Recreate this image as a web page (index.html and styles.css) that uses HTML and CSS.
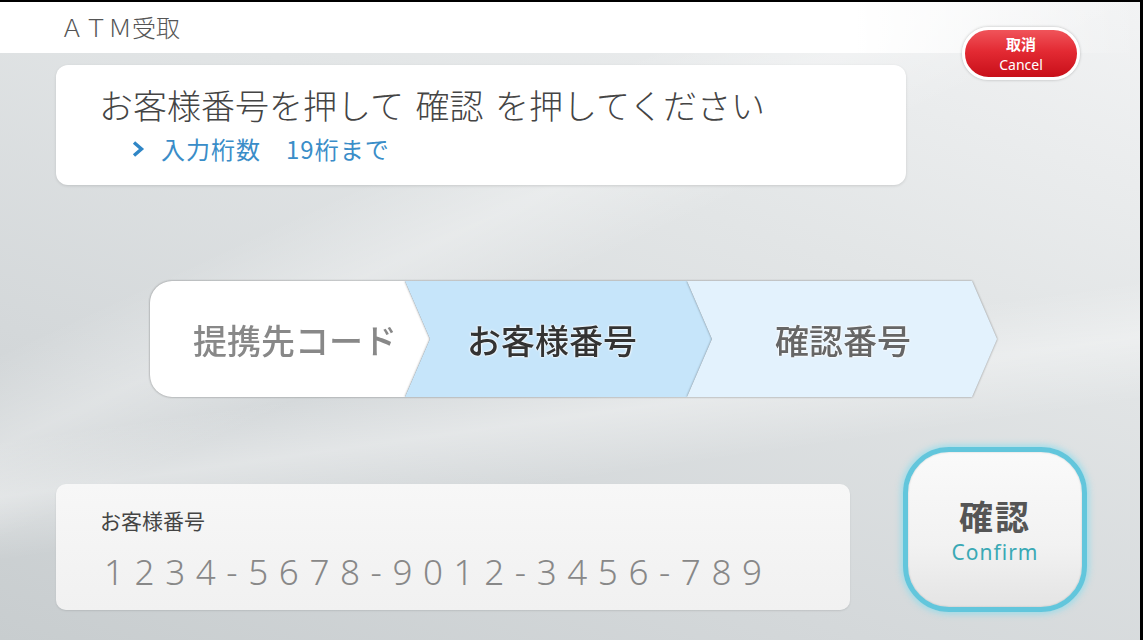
FILE: index.html
```html
<!DOCTYPE html>
<html lang="ja">
<head>
    <meta charset="UTF-8">
    <meta name="viewport" content="width=device-width, initial-scale=1.0">
    <title>ATM受取</title>
    <link rel="stylesheet" href="styles.css">
</head>
<body>
    <div class="screen">
        <div class="top">
            <div class="top-left">
                <div class="title">ＡＴＭ受取</div>
                <div class="card">
                    <p class="guide">お客様番号を押して 確認 を押してください</p>
                    <p class="sub">
                        <svg class="chev" width="14" height="18" viewBox="0 0 14 18"><path d="M3 2.5 L10.5 9 L3 15.5" fill="none" stroke="#2f86c6" stroke-width="3.4"/></svg>
                        入力桁数　19桁まで
                    </p>
                </div>
            </div>
            <button class="cancel" type="button">
                <span class="cancel-jp">取消</span>
                <span class="cancel-en">Cancel</span>
            </button>
        </div>

        <div class="steps">
            <div class="step-wrap"><div class="step step-done">提携先コード</div></div>
            <div class="step-wrap"><div class="step step-now">お客様番号</div></div>
            <div class="step-wrap"><div class="step step-next">確認番号</div></div>
        </div>

        <div class="bottom">
            <div class="field">
                <div class="field-label">お客様番号</div>
                <div class="field-value">1234-5678-9012-3456-789</div>
            </div>
            <button class="confirm" type="button">
                <span class="confirm-jp">確認</span>
                <span class="confirm-en">Confirm</span>
            </button>
        </div>
    </div>
</body>
</html>
```

FILE: styles.css
```css
*{
    margin:0;
    padding:0;
    box-sizing:border-box;
}
body{
    width:1143px;
    height:640px;
    overflow:hidden;
    font-family:"Noto Sans CJK JP", "Noto Sans", sans-serif;
}
.screen{
    width:1143px;
    height:640px;
    border-top:2px solid #000;
    border-right:3px solid #000;
    background:
        linear-gradient(to right, #fff 0, #fff 75%, rgba(255,255,255,0) 100%) top/100% 51px no-repeat,
        linear-gradient(172deg, rgba(255,255,255,0) 55%, rgba(255,255,255,.35) 62%, rgba(255,255,255,0) 70%),
        linear-gradient(155deg, rgba(255,255,255,0) 30%, rgba(255,255,255,.3) 38%, rgba(255,255,255,0) 46%),
        linear-gradient(200deg, #f2f3f4 0%, #e2e5e6 35%, #d4d8da 70%, #c8cdcf 100%);
    overflow:hidden;
}
.top{
    display:flex;
    padding-left:56px;
}
.top-left{
    width:850px;
}
.title{
    height:51px;
    padding:10px 0 0 4px;
    font-size:24px;
    font-weight:300;
    color:#555;
    line-height:30px;
}
.card{
    margin-top:12px;
    height:120px;
    background:#fff;
    border-radius:12px;
    box-shadow:0 1px 3px rgba(0,0,0,.12);
    padding:18px 0 0 43px;
}
.guide{
    font-size:34px;
    font-weight:300;
    color:#444;
    line-height:44px;
    word-spacing:4px;
}
.sub{
    display:flex;
    align-items:center;
    margin:7px 0 0 32px;
    font-size:24px;
    letter-spacing:1px;
    color:#3a8dc8;
    line-height:30px;
}
.chev{
    margin-right:16px;
}
.cancel{
    margin:25px 0 0 56px;
    width:118px;
    height:53px;
    border:3px solid #fff;
    border-radius:27px;
    background:linear-gradient(to bottom, #f0545a 0%, #e32a33 45%, #c80f19 100%);
    box-shadow:0 0 3px rgba(0,0,0,.25);
    display:flex;
    flex-direction:column;
    align-items:center;
    justify-content:center;
    color:#fff;
    font-family:"Noto Sans CJK JP", sans-serif;
}
.cancel-jp{
    font-size:15px;
    font-weight:700;
    line-height:22px;
}
.cancel-en{
    font-family:"Noto Sans", sans-serif;
    font-size:14px;
    line-height:19px;
}
.steps{
    display:flex;
    margin:96px 0 0 150px;
    height:116px;
}
.step-wrap{
    filter:drop-shadow(0 0 1px rgba(0,0,0,.4));
}
.step-wrap + .step-wrap{
    margin-left:-25px;
}
.step{
    height:116px;
    display:flex;
    align-items:center;
    font-size:34px;
    font-weight:500;
    text-shadow:0 0 3px #fff, 0 0 2px #fff, 0 0 1px #fff;
}
.step-done{
    width:280px;
    padding-left:43px;
    background:#fff;
    color:#888;
    border-radius:22px 0 0 22px;
    clip-path:polygon(0 0, 255px 0, 100% 50%, 255px 100%, 0 100%);
}
.step-now{
    width:307px;
    padding-left:62px;
    background:#c6e5fa;
    color:#333;
    clip-path:polygon(0 0, calc(100% - 25px) 0, 100% 50%, calc(100% - 25px) 100%, 0 100%, 25px 50%);
}
.step-next{
    width:310px;
    padding-left:88px;
    background:#e3f2fd;
    color:#666;
    clip-path:polygon(0 0, calc(100% - 25px) 0, 100% 50%, calc(100% - 25px) 100%, 0 100%, 25px 50%);
}
.bottom{
    display:flex;
    align-items:flex-end;
    margin-top:50px;
    padding-left:56px;
}
.field{
    width:794px;
    height:126px;
    margin-bottom:2px;
    border-radius:10px;
    background:linear-gradient(to bottom, #f7f7f7, #f1f1f1);
    box-shadow:0 1px 2px rgba(0,0,0,.1);
    padding:22px 0 0 44px;
}
.field-label{
    font-size:21px;
    color:#444;
    line-height:28px;
}
.field-value{
    margin-top:18px;
    font-family:"Noto Sans", sans-serif;
    font-weight:300;
    font-size:35px;
    letter-spacing:10.6px;
    color:#888;
    line-height:40px;
    padding-left:4px;
}
.confirm{
    margin-left:53px;
    width:184px;
    height:165px;
    border-radius:46px;
    border:5px solid #62c6dc;
    box-shadow:0 0 6px 2px rgba(130,220,238,.7), inset 0 0 2px rgba(0,0,0,.2);
    background:linear-gradient(to bottom, #fafafa 0%, #f2f2f2 60%, #e4e4e4 100%);
    display:flex;
    flex-direction:column;
    align-items:center;
    justify-content:center;
}
.confirm-jp{
    font-family:"Noto Sans CJK JP", sans-serif;
    font-size:34px;
    font-weight:700;
    color:#555;
    line-height:40px;
    letter-spacing:2px;
    margin-top:2px;
}
.confirm-en{
    font-family:"Noto Sans", sans-serif;
    font-size:21px;
    color:#3aa9b5;
    letter-spacing:1px;
    line-height:28px;
    margin-top:2px;
}
```
